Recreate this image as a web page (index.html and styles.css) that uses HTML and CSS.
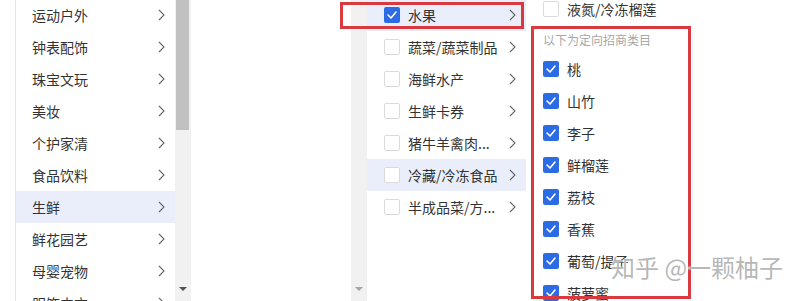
FILE: index.html
```html
<!DOCTYPE html>
<html lang="zh-CN">

<head>
    <meta charset="utf-8">
    <title>类目选择</title>
    <link rel="stylesheet" href="styles.css">
</head>

<body>
    <div class="cascader">
        <!-- 一级类目 -->
        <div class="panel panel-first">
            <ul class="menu">
                <li class="item"><span class="label">运动户外</span><svg class="arrow-right" width="7" height="12" viewBox="0 0 7 12"><polyline points="1,1 6,6 1,11"/></svg></li>
                <li class="item"><span class="label">钟表配饰</span><svg class="arrow-right" width="7" height="12" viewBox="0 0 7 12"><polyline points="1,1 6,6 1,11"/></svg></li>
                <li class="item"><span class="label">珠宝文玩</span><svg class="arrow-right" width="7" height="12" viewBox="0 0 7 12"><polyline points="1,1 6,6 1,11"/></svg></li>
                <li class="item"><span class="label">美妆</span><svg class="arrow-right" width="7" height="12" viewBox="0 0 7 12"><polyline points="1,1 6,6 1,11"/></svg></li>
                <li class="item"><span class="label">个护家清</span><svg class="arrow-right" width="7" height="12" viewBox="0 0 7 12"><polyline points="1,1 6,6 1,11"/></svg></li>
                <li class="item"><span class="label">食品饮料</span><svg class="arrow-right" width="7" height="12" viewBox="0 0 7 12"><polyline points="1,1 6,6 1,11"/></svg></li>
                <li class="item active"><span class="label">生鲜</span><svg class="arrow-right" width="7" height="12" viewBox="0 0 7 12"><polyline points="1,1 6,6 1,11"/></svg></li>
                <li class="item"><span class="label">鲜花园艺</span><svg class="arrow-right" width="7" height="12" viewBox="0 0 7 12"><polyline points="1,1 6,6 1,11"/></svg></li>
                <li class="item"><span class="label">母婴宠物</span><svg class="arrow-right" width="7" height="12" viewBox="0 0 7 12"><polyline points="1,1 6,6 1,11"/></svg></li>
                <li class="item"><span class="label">服饰内衣</span><svg class="arrow-right" width="7" height="12" viewBox="0 0 7 12"><polyline points="1,1 6,6 1,11"/></svg></li>
            </ul>
            <div class="scrollbar">
                <div class="thumb"></div>
                <span class="scroll-down"></span>
            </div>
        </div>

        <!-- 空白列 -->
        <div class="panel panel-empty">
            <div class="menu"></div>
            <div class="scrollbar idle">
                <span class="scroll-down"></span>
            </div>
        </div>

        <!-- 二级类目 -->
        <div class="panel panel-check">
            <ul class="menu">
                <li class="item active"><span class="box checked"><svg width="16" height="16" viewBox="0 0 16 16"><polyline points="4,8 7,11 12,5"/></svg></span><span class="label">水果</span><svg class="arrow-right" width="7" height="12" viewBox="0 0 7 12"><polyline points="1,1 6,6 1,11"/></svg></li>
                <li class="item"><span class="box"></span><span class="label">蔬菜/蔬菜制品</span><svg class="arrow-right" width="7" height="12" viewBox="0 0 7 12"><polyline points="1,1 6,6 1,11"/></svg></li>
                <li class="item"><span class="box"></span><span class="label">海鲜水产</span><svg class="arrow-right" width="7" height="12" viewBox="0 0 7 12"><polyline points="1,1 6,6 1,11"/></svg></li>
                <li class="item"><span class="box"></span><span class="label">生鲜卡券</span><svg class="arrow-right" width="7" height="12" viewBox="0 0 7 12"><polyline points="1,1 6,6 1,11"/></svg></li>
                <li class="item"><span class="box"></span><span class="label">猪牛羊禽肉...</span><svg class="arrow-right" width="7" height="12" viewBox="0 0 7 12"><polyline points="1,1 6,6 1,11"/></svg></li>
                <li class="item active"><span class="box"></span><span class="label">冷藏/冷冻食品</span><svg class="arrow-right" width="7" height="12" viewBox="0 0 7 12"><polyline points="1,1 6,6 1,11"/></svg></li>
                <li class="item"><span class="box"></span><span class="label">半成品菜/方...</span><svg class="arrow-right" width="7" height="12" viewBox="0 0 7 12"><polyline points="1,1 6,6 1,11"/></svg></li>
            </ul>
        </div>

        <!-- 三级类目 -->
        <div class="panel panel-check panel-leaf">
            <ul class="menu">
                <li class="item"><span class="box"></span><span class="label">液氮/冷冻榴莲</span></li>
                <li class="group-title">以下为定向招商类目</li>
                <li class="item"><span class="box checked"><svg width="16" height="16" viewBox="0 0 16 16"><polyline points="4,8 7,11 12,5"/></svg></span><span class="label">桃</span></li>
                <li class="item"><span class="box checked"><svg width="16" height="16" viewBox="0 0 16 16"><polyline points="4,8 7,11 12,5"/></svg></span><span class="label">山竹</span></li>
                <li class="item"><span class="box checked"><svg width="16" height="16" viewBox="0 0 16 16"><polyline points="4,8 7,11 12,5"/></svg></span><span class="label">李子</span></li>
                <li class="item"><span class="box checked"><svg width="16" height="16" viewBox="0 0 16 16"><polyline points="4,8 7,11 12,5"/></svg></span><span class="label">鲜榴莲</span></li>
                <li class="item"><span class="box checked"><svg width="16" height="16" viewBox="0 0 16 16"><polyline points="4,8 7,11 12,5"/></svg></span><span class="label">荔枝</span></li>
                <li class="item"><span class="box checked"><svg width="16" height="16" viewBox="0 0 16 16"><polyline points="4,8 7,11 12,5"/></svg></span><span class="label">香蕉</span></li>
                <li class="item"><span class="box checked"><svg width="16" height="16" viewBox="0 0 16 16"><polyline points="4,8 7,11 12,5"/></svg></span><span class="label">葡萄/提子</span></li>
                <li class="item"><span class="box checked"><svg width="16" height="16" viewBox="0 0 16 16"><polyline points="4,8 7,11 12,5"/></svg></span><span class="label">菠萝蜜</span></li>
            </ul>
        </div>
    </div>

    <div class="mark mark-row"></div>
    <div class="mark mark-group"></div>
    <div class="watermark">知乎 @一颗柚子</div>
</body>

</html>
```

FILE: styles.css
```css
body {
    margin: 0;
    padding: 0;
    background-color: #fff;
    color: #333;
    font-family: "Noto Sans CJK SC", "Noto Sans", sans-serif;
    font-size: 14px;
}

ul {
    margin: 0;
    padding: 0;
    list-style: none;
}

.cascader {
    display: flex;
    height: 301px;
    padding-left: 15px;
    overflow: hidden;
}

.panel {
    display: flex;
    height: 100%;
}

.panel-first {
    border-left: 1px solid #e6e6e6;
}

.panel-first .menu {
    width: 159px;
}

.panel-empty .menu {
    width: 160px;
}

.panel-check .menu {
    width: 159px;
}

.panel-leaf .menu {
    width: 162px;
}

.menu {
    margin-top: -1px;
}

.panel-leaf .menu {
    margin-top: -7px;
}

.item {
    display: flex;
    align-items: center;
    height: 32px;
    padding: 0 10px 0 16px;
    white-space: nowrap;
}

.panel-check .item {
    padding-left: 17px;
}

.item.active {
    background-color: #eaeefb;
}

.label {
    flex: 1;
    line-height: 20px;
}

.arrow-right polyline {
    fill: none;
    stroke: #666;
    stroke-width: 1.1;
}

.box {
    box-sizing: border-box;
    width: 16px;
    height: 16px;
    margin-right: 8px;
    border: 1px solid #dadada;
    border-radius: 2px;
    background-color: #fff;
}

.box.checked {
    border: none;
    background-color: #2b6be6;
}

.box svg {
    display: block;
}

.box polyline {
    fill: none;
    stroke: #fff;
    stroke-width: 1.6;
    stroke-linecap: round;
    stroke-linejoin: round;
}

.group-title {
    height: 28px;
    line-height: 30px;
    padding-left: 17px;
    font-size: 12px;
    color: #a8a8a8;
}

.scrollbar {
    display: flex;
    flex-direction: column;
    box-sizing: border-box;
    width: 16px;
    padding-bottom: 10px;
    background-color: #f1f1f1;
}

.thumb {
    height: 130px;
    margin: 0 2px 0 1px;
    background-color: #c1c1c1;
}

.scroll-down {
    width: 0;
    height: 0;
    margin: auto auto 0;
    border-left: 4px solid transparent;
    border-right: 4px solid transparent;
    border-top: 4px solid #505050;
}

.idle .scroll-down {
    border-top-color: #a3a3a3;
}

.mark {
    position: absolute;
    box-sizing: border-box;
    border: 3px solid #d93a3f;
}

.mark-row {
    left: 340px;
    top: 2px;
    width: 184px;
    height: 27px;
}

.mark-group {
    left: 531px;
    top: 26px;
    width: 160px;
    height: 273px;
}

.watermark {
    position: absolute;
    left: 611px;
    top: 251px;
    font-size: 24px;
    line-height: 32px;
    color: rgba(160, 160, 160, 0.75);
    text-shadow: 0 0 2px #fff, 0 0 1px #fff;
    white-space: nowrap;
}
```
